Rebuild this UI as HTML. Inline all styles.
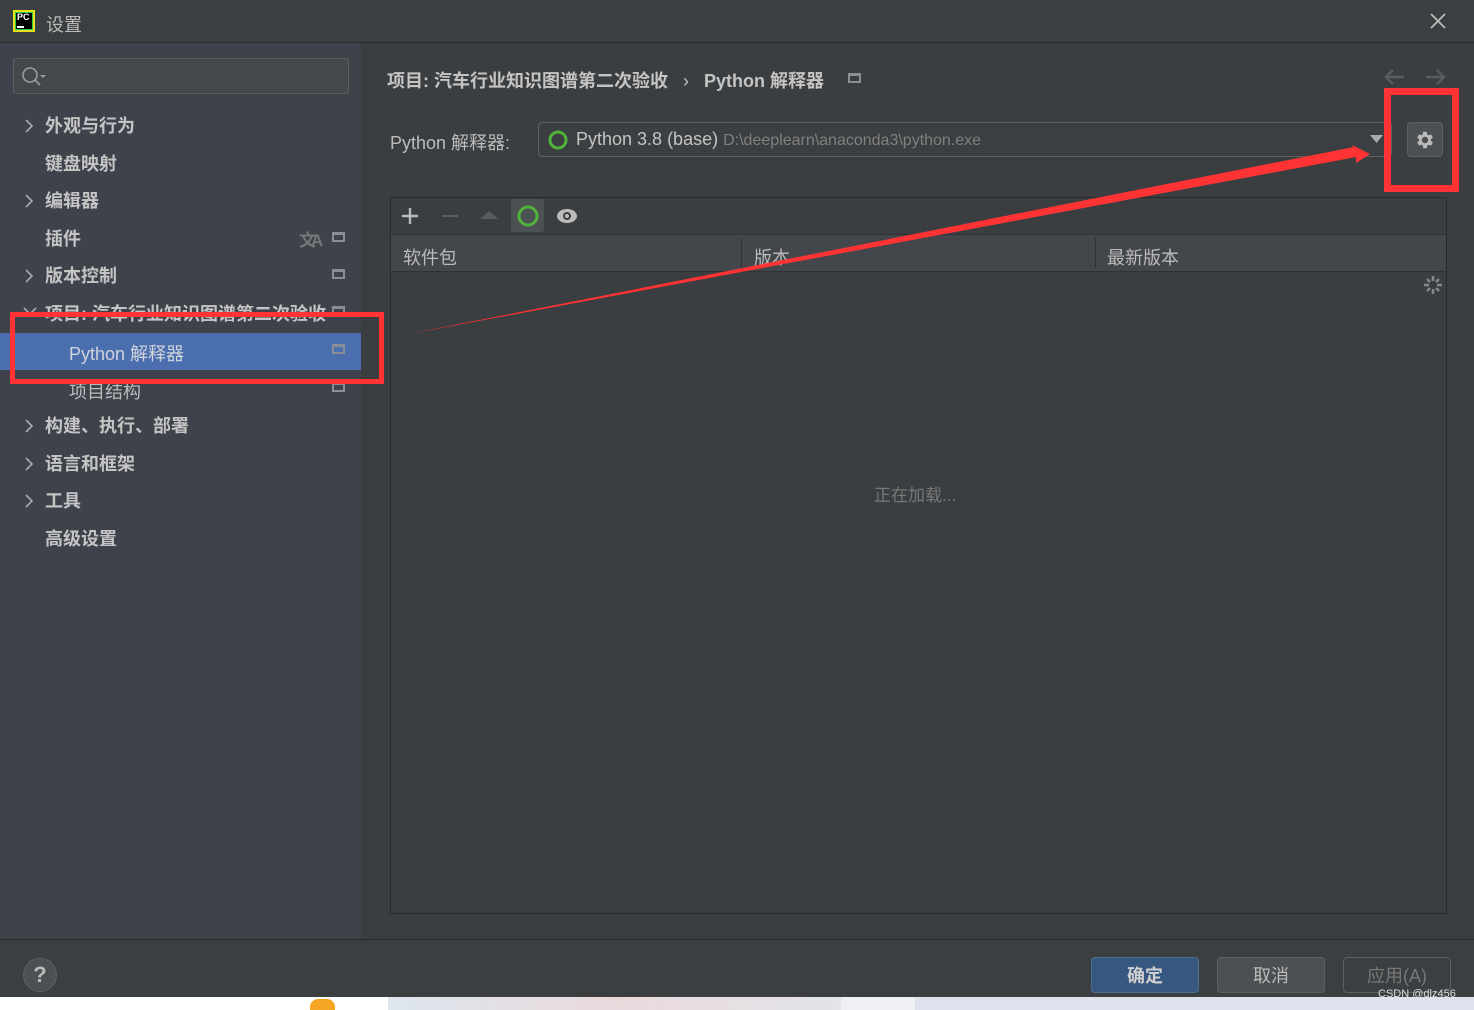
<!DOCTYPE html>
<html><head><meta charset="utf-8">
<style>
*{box-sizing:border-box;margin:0;padding:0}
body{width:1474px;height:1010px;overflow:hidden;background:#3c3f41;font-family:"Liberation Sans","Noto Sans CJK SC",sans-serif;color:#bbbbbb;position:relative}
.abs{position:absolute}
.title{left:0;top:0;width:1474px;height:43px;background:#3c3f41;border-bottom:1px solid #2b2b2b}
.side{left:0;top:43px;width:361px;height:896px;background:#3e424b}
.item{position:absolute;left:45px;font-size:18px;font-weight:bold;color:#c4c4c4;line-height:20px}
.chev{position:absolute;left:23px}
.mini{position:absolute;left:332px;width:13px;height:10px;border:2px solid #8a8d93;border-top-width:3px}
.main{left:361px;top:43px;width:1113px;height:896px;background:#3b3e41}
.footer{left:0;top:939px;width:1474px;height:58px;background:#3c3f41;border-top:1px solid #2b2b2b}
.btn{position:absolute;top:957px;height:36px;border-radius:4px;font-size:18px;text-align:center;line-height:36px}
</style></head><body>
<div class="abs title"></div>
<div class="abs" style="left:13px;top:10px;width:22px;height:22px;background:#000;border:2px solid #e4e31b;color:#fff;font-size:9px;font-weight:bold;padding-left:2px;line-height:11px;box-shadow:0 0 0 1px #2ec94a inset">PC<div style="width:7px;height:2px;background:#fff;margin-top:3px"></div></div>
<div class="abs" style="left:46px;top:11px;font-size:18px;color:#bbb">设置</div>
<svg class="abs" style="left:1430px;top:13px" width="16" height="16"><path d="M1 1L15 15M15 1L1 15" stroke="#bbb" stroke-width="1.8"/></svg>

<div class="abs side"></div>
<div class="abs" style="left:13px;top:58px;width:336px;height:36px;background:#45484a;border:1px solid #5e6060;border-radius:3px"></div>
<svg class="abs" style="left:20px;top:66px" width="28" height="22"><circle cx="10" cy="9" r="7" fill="none" stroke="#999" stroke-width="1.6"/><line x1="15" y1="14" x2="20" y2="19" stroke="#999" stroke-width="1.8"/><path d="M20 9l6 0l-3 3z" fill="#999"/></svg>

<svg class="chev" style="top:118px" width="12" height="16"><path d="M3 2l6 6-6 6" fill="none" stroke="#aaa" stroke-width="1.6"/></svg><div class="item" style="top:116px">外观与行为</div>
<div class="item" style="top:154px">键盘映射</div>
<svg class="chev" style="top:193px" width="12" height="16"><path d="M3 2l6 6-6 6" fill="none" stroke="#aaa" stroke-width="1.6"/></svg><div class="item" style="top:191px">编辑器</div>
<div class="item" style="top:229px">插件</div>
<div class="abs" style="left:299px;top:226px;font-size:17px;color:#777;font-weight:bold;letter-spacing:-5px">文A</div>
<div class="mini" style="top:232px"></div>
<svg class="chev" style="top:268px" width="12" height="16"><path d="M3 2l6 6-6 6" fill="none" stroke="#aaa" stroke-width="1.6"/></svg><div class="item" style="top:266px">版本控制</div>
<div class="mini" style="top:269px"></div>
<svg class="chev" style="top:305px" width="14" height="12"><path d="M1 3l6 6 6-6" fill="none" stroke="#aaa" stroke-width="1.6"/></svg><div class="item" style="top:304px">项目: 汽车行业知识图谱第二次验收</div>
<div class="mini" style="top:306px"></div>
<div class="abs" style="left:0;top:333px;width:361px;height:37px;background:#4b6eaf"></div>
<div class="abs" style="left:69px;top:340px;font-size:18px;color:#d0d4dc">Python 解释器</div>
<div class="mini" style="top:344px"></div>
<div class="abs" style="left:69px;top:378px;font-size:18px;color:#bbb">项目结构</div>
<div class="mini" style="top:382px"></div>
<svg class="chev" style="top:418px" width="12" height="16"><path d="M3 2l6 6-6 6" fill="none" stroke="#aaa" stroke-width="1.6"/></svg><div class="item" style="top:416px">构建、执行、部署</div>
<svg class="chev" style="top:456px" width="12" height="16"><path d="M3 2l6 6-6 6" fill="none" stroke="#aaa" stroke-width="1.6"/></svg><div class="item" style="top:454px">语言和框架</div>
<svg class="chev" style="top:493px" width="12" height="16"><path d="M3 2l6 6-6 6" fill="none" stroke="#aaa" stroke-width="1.6"/></svg><div class="item" style="top:491px">工具</div>
<div class="item" style="top:529px">高级设置</div>

<div class="abs main"></div>
<div class="abs" style="left:387px;top:67px;font-size:18px;font-weight:bold;color:#c4c4c4">项目: 汽车行业知识图谱第二次验收 <span style="font-weight:normal;margin:0 10px">›</span> Python 解释器</div>
<div class="mini" style="left:848px;top:73px"></div>
<svg class="abs" style="left:1384px;top:68px" width="64" height="18"><g fill="none" stroke="#5a5d60" stroke-width="2.4"><path d="M20 9H2M9 2L2 9l7 7"/><path d="M42 9h18M53 2l7 7-7 7"/></g></svg>
<div class="abs" style="left:390px;top:129px;font-size:18px;color:#bbb">Python 解释器:</div>
<div class="abs" style="left:538px;top:122px;width:854px;height:35px;border:1px solid #5e6060;border-radius:4px;background:#3c3f41"></div>
<svg class="abs" style="left:548px;top:130px" width="20" height="20"><circle cx="10" cy="10" r="8" fill="none" stroke="#4fb33c" stroke-width="3"/></svg>
<div class="abs" style="left:576px;top:129px;font-size:18px;color:#c4c4c4">Python 3.8 (base) <span style="font-size:16px;color:#808080">D:\deeplearn\anaconda3\python.exe</span></div>
<svg class="abs" style="left:1370px;top:135px" width="14" height="10"><path d="M0 0h13l-6.5 8z" fill="#aaa"/></svg>
<div class="abs" style="left:1407px;top:122px;width:36px;height:35px;background:#4c5052;border:1px solid #5e6060;border-radius:4px"></div>
<svg class="abs" style="left:1414px;top:129px" width="22" height="22" viewBox="0 0 24 24"><path fill="#bbb" d="M19.4 13a7.5 7.5 0 0 0 0-2l2.1-1.6-2-3.5-2.5 1a7 7 0 0 0-1.7-1L15 3h-4l-.4 2.8a7 7 0 0 0-1.7 1l-2.5-1-2 3.5L6.6 11a7.5 7.5 0 0 0 0 2l-2.1 1.6 2 3.5 2.5-1a7 7 0 0 0 1.7 1L11 21h4l.4-2.8a7 7 0 0 0 1.7-1l2.5 1 2-3.5zM13 15.5a3.5 3.5 0 1 1 0-7 3.5 3.5 0 0 1 0 7z" transform="translate(-1 0)"/></svg>

<div class="abs" style="left:390px;top:197px;width:1057px;height:717px;border:1px solid #2b2b2b;background:#3b3e41"></div>
<div class="abs" style="left:391px;top:234px;width:1055px;height:38px;background:#43464a;border-top:1px solid #2f3133;border-bottom:1px solid #2f3133"></div>
<div class="abs" style="left:741px;top:238px;width:1px;height:30px;background:#2f3133"></div>
<div class="abs" style="left:1095px;top:238px;width:1px;height:30px;background:#2f3133"></div>
<svg class="abs" style="left:402px;top:208px" width="16" height="16"><path d="M8 0v16M0 8h16" stroke="#bbb" stroke-width="2.4"/></svg>
<div class="abs" style="left:442px;top:215px;width:16px;height:2px;background:#5a5d60"></div>
<svg class="abs" style="left:480px;top:210px" width="18" height="10"><path d="M0 9l9-8l9 8z" fill="#5a5d60"/></svg>
<div class="abs" style="left:511px;top:199px;width:33px;height:33px;background:#4c5052;border-radius:3px"></div>
<svg class="abs" style="left:516px;top:204px" width="24" height="24"><circle cx="12" cy="12" r="9" fill="none" stroke="#4fb33c" stroke-width="3"/></svg>
<svg class="abs" style="left:556px;top:207px" width="22" height="18"><ellipse cx="11" cy="9" rx="10" ry="7" fill="#bbb"/><circle cx="11" cy="9" r="4" fill="#3b3e41"/><circle cx="11" cy="9" r="2" fill="#bbb"/></svg>
<div class="abs" style="left:403px;top:244px;font-size:18px;color:#bbb">软件包</div>
<div class="abs" style="left:754px;top:244px;font-size:18px;color:#bbb">版本</div>
<div class="abs" style="left:1107px;top:244px;font-size:18px;color:#bbb">最新版本</div>
<svg class="abs" style="left:1423px;top:275px" width="20" height="20"><g stroke="#888" stroke-width="2.5"><line x1="10" y1="1" x2="10" y2="6"/><line x1="10" y1="14" x2="10" y2="19"/><line x1="1" y1="10" x2="6" y2="10"/><line x1="14" y1="10" x2="19" y2="10"/><line x1="4" y1="4" x2="7" y2="7"/><line x1="13" y1="13" x2="16" y2="16"/><line x1="16" y1="4" x2="13" y2="7"/><line x1="4" y1="16" x2="7" y2="13"/></g></svg>
<div class="abs" style="left:874px;top:481px;font-size:17px;color:#787878">正在加载...</div>

<div class="abs footer"></div>
<div class="abs" style="left:23px;top:958px;width:34px;height:34px;border-radius:50%;background:#4c5052;border:1px solid #5e6060;text-align:center;line-height:32px;font-size:22px;font-weight:bold;color:#bbb">?</div>
<div class="btn" style="left:1091px;width:108px;background:#365880;border:1px solid #4c708c;color:#d0d0d0;font-weight:bold">确定</div>
<div class="btn" style="left:1217px;width:108px;background:#4c5052;border:1px solid #5e6060;color:#bbb">取消</div>
<div class="btn" style="left:1343px;width:108px;background:#3c3f41;border:1px solid #5e6060;color:#777">应用(A)</div>
<div class="abs" style="left:1378px;top:988px;font-size:11px;color:#ddd">CSDN @dlz456</div>

<div class="abs" style="left:0;top:997px;width:388px;height:13px;background:#fff"></div>
<div class="abs" style="left:310px;top:999px;width:25px;height:11px;background:#f5a623;border-radius:8px 8px 0 0"></div>
<div class="abs" style="left:388px;top:997px;width:453px;height:13px;background:linear-gradient(90deg,#dde6ee,#ead9dc,#e2e4ea)"></div>
<div class="abs" style="left:841px;top:997px;width:74px;height:13px;background:#eef0f3"></div>
<div class="abs" style="left:915px;top:997px;width:559px;height:13px;background:#dde2ec"></div>

<svg class="abs" style="left:0;top:0" width="1474" height="1010">
<rect x="12.5" y="314.5" width="369" height="67" fill="none" stroke="#ff3333" stroke-width="5"/>
<rect x="1387.5" y="91.5" width="68" height="97" fill="none" stroke="#ff3333" stroke-width="7"/>
<polygon points="409,334 1355,150 1352,145 1370,154 1356,163 1356,157" fill="#ff3333"/>
<polygon points="409,334 1354,147 1356,157" fill="#ff3333"/>
</svg>
</body></html>
